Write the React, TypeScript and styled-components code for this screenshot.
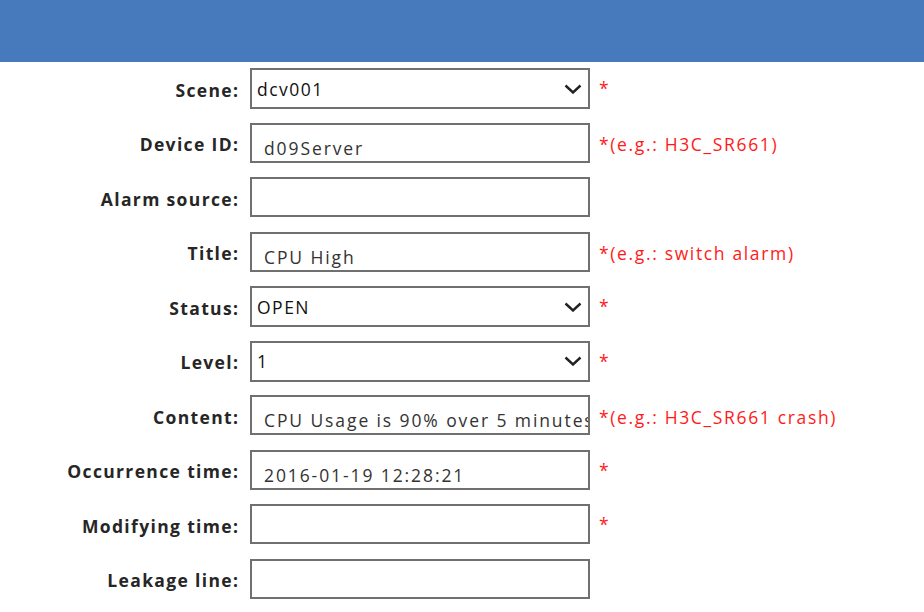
import React from "react";
import styled, { createGlobalStyle } from "styled-components";

const Global = createGlobalStyle`
  html, body { margin: 0; padding: 0; background: #ffffff; }
  body { font-family: "Open Sans", "Noto Sans", sans-serif; }
  * { box-sizing: border-box; }
`;

const Page = styled.div`
  width: 924px;
  height: 612px;
  overflow: hidden;
  background: #ffffff;
`;

const Header = styled.header`
  height: 62px;
  background: #4779bd;
`;

const Form = styled.div`
  display: grid;
  grid-template-columns: 238px 340px 1fr;
  grid-auto-rows: 40px;
  column-gap: 12px;
  row-gap: 14.5px;
  padding-top: 6px;
`;

const Label = styled.div`
  display: flex;
  align-items: center;
  justify-content: flex-end;
  padding-top: 3px;
  font-family: "Open Sans", sans-serif;
  font-weight: 700;
  font-size: 17.5px;
  letter-spacing: 1.35px;
  margin-right: -1.35px;
  color: #262626;
  white-space: nowrap;
`;

const Control = styled.div<{ $select?: boolean }>`
  height: ${(p) => (p.$select ? "41px" : "40px")};
  border: 2px solid #707070;
  background: #ffffff;
  display: flex;
  align-items: ${(p) => (p.$select ? "center" : "flex-end")};
  padding: ${(p) => (p.$select ? "0 6px 0 5px" : "0 0 1px 12px")};
  overflow: hidden;
  font-family: "Open Sans", sans-serif;
  font-size: 17.5px;
  letter-spacing: ${(p) => (p.$select ? "1.5px" : "1.9px")};
  color: ${(p) => (p.$select ? "#111111" : "#333333")};
  white-space: nowrap;
`;

const Value = styled.span`
  flex: 1;
  overflow: hidden;
  white-space: nowrap;
`;

const Chevron = styled.svg`
  flex: none;
  width: 18px;
  height: 10px;
`;

const Hint = styled.div<{ $select?: boolean }>`
  margin-left: -3px;
  display: flex;
  align-items: ${(p) => (p.$select ? "flex-start" : "center")};
  padding-top: ${(p) => (p.$select ? "8px" : "3px")};
  font-family: "Open Sans", sans-serif;
  font-size: 17.5px;
  letter-spacing: 1.65px;
  color: #ff1a1a;
  white-space: nowrap;
`;

type Row = {
  label: string;
  value?: string;
  select?: boolean;
  hint?: string;
};

const rows: Row[] = [
  { label: "Scene:", value: "dcv001", select: true, hint: "*" },
  { label: "Device ID:", value: "d09Server", hint: "*(e.g.: H3C_SR661)" },
  { label: "Alarm source:", value: "" },
  { label: "Title:", value: "CPU High", hint: "*(e.g.: switch alarm)" },
  { label: "Status:", value: "OPEN", select: true, hint: "*" },
  { label: "Level:", value: "1", select: true, hint: "*" },
  { label: "Content:", value: "CPU Usage is 90% over 5 minutes", hint: "*(e.g.: H3C_SR661 crash)" },
  { label: "Occurrence time:", value: "2016-01-19 12:28:21", hint: "*" },
  { label: "Modifying time:", value: "", hint: "*" },
  { label: "Leakage line:", value: "" },
];

const ChevronIcon = () => (
  <Chevron viewBox="0 0 18 10">
    <path d="M1.5 1.5 L9 8.5 L16.5 1.5" fill="none" stroke="#222222" strokeWidth="2.4" />
  </Chevron>
);

export default function App() {
  return (
    <Page>
      <Global />
      <Header />
      <Form>
        {rows.map((r) => (
          <React.Fragment key={r.label}>
            <Label>{r.label}</Label>
            <Control $select={r.select}>
              <Value>{r.value}</Value>
              {r.select && <ChevronIcon />}
            </Control>
            <Hint $select={r.select || r.hint === "*"}>{r.hint ?? ""}</Hint>
          </React.Fragment>
        ))}
      </Form>
    </Page>
  );
}
